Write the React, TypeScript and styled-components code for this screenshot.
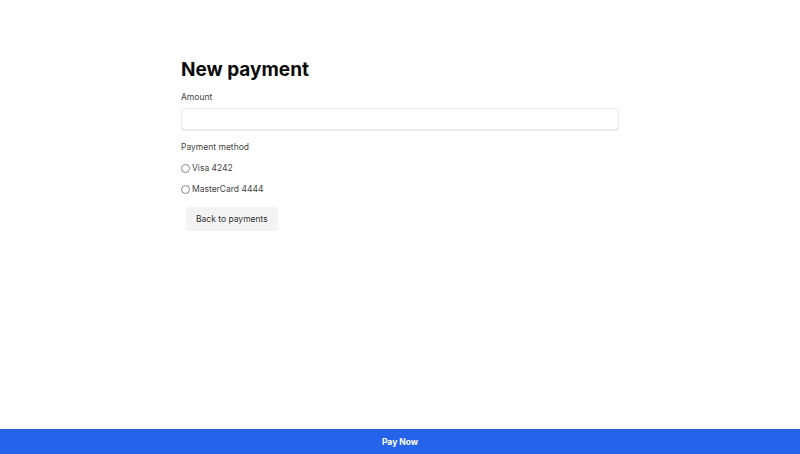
import React, { useState } from 'react';
import styled, { createGlobalStyle } from 'styled-components';

const GlobalStyle = createGlobalStyle`
  html, body {
    margin: 0;
    padding: 0;
    background: #ffffff;
    font-family: Inter, "Noto Sans", sans-serif;
    color: #111111;
  }
  * { box-sizing: border-box; }
`;

const Page = styled.div`
  display: flex;
  flex-direction: column;
  height: 454px;
  width: 800px;
`;

const Main = styled.div`
  flex: 1;
  display: flex;
  justify-content: center;
`;

const Form = styled.form`
  width: 438px;
  padding-top: 58px;
  display: flex;
  flex-direction: column;
`;

const Title = styled.h1`
  margin: 0 0 9px;
  font-size: 19px;
  line-height: 24px;
  font-weight: 700;
  color: #0a0a0a;
`;

const Label = styled.label`
  font-size: 8.5px;
  line-height: 12px;
  color: #444;
  margin-bottom: 5px;
`;

const Input = styled.input`
  height: 22px;
  width: 100%;
  border: 1px solid #ececec;
  border-radius: 4px;
  box-shadow: 0 1px 1px rgba(0, 0, 0, 0.1);
  padding: 0 8px;
  font-family: inherit;
  font-size: 10px;
  margin-bottom: 11px;
  outline: none;
`;

const Options = styled.div`
  display: flex;
  flex-direction: column;
  gap: 9px;
  margin-top: 4px;
`;

const RadioRow = styled.label`
  display: flex;
  align-items: center;
  gap: 2px;
  font-size: 8.5px;
  line-height: 12px;
  color: #444;
  cursor: pointer;
`;

const Radio = styled.input`
  appearance: none;
  width: 9px;
  height: 9px;
  margin: 0;
  border: 1px solid #888;
  border-radius: 50%;
  background: #fff;

  &:checked {
    border: 3px solid #2563eb;
  }
`;

const BackButton = styled.button`
  align-self: flex-start;
  margin: 12px 0 0 5px;
  height: 24px;
  padding: 0 10px;
  border: none;
  border-radius: 4px;
  background: #f3f3f3;
  font-family: inherit;
  font-size: 8.5px;
  color: #333;
  cursor: pointer;
`;

const PayBar = styled.button`
  height: 25px;
  width: 100%;
  border: none;
  background: #2563eb;
  color: #ffffff;
  font-family: inherit;
  font-size: 8.5px;
  font-weight: 700;
  cursor: pointer;
`;

const methods = ['Visa 4242', 'MasterCard 4444'];

export default function App() {
  const [amount, setAmount] = useState('');
  const [method, setMethod] = useState<string | null>(null);

  return (
    <Page>
      <GlobalStyle />
      <Main>
        <Form onSubmit={(e) => e.preventDefault()}>
          <Title>New payment</Title>
          <Label htmlFor="amount">Amount</Label>
          <Input id="amount" value={amount} onChange={(e) => setAmount(e.target.value)} />
          <Label>Payment method</Label>
          <Options>
            {methods.map((m) => (
              <RadioRow key={m}>
                <Radio
                  type="radio"
                  name="method"
                  checked={method === m}
                  onChange={() => setMethod(m)}
                />
                {m}
              </RadioRow>
            ))}
          </Options>
          <BackButton type="button">Back to payments</BackButton>
        </Form>
      </Main>
      <PayBar>Pay Now</PayBar>
    </Page>
  );
}
